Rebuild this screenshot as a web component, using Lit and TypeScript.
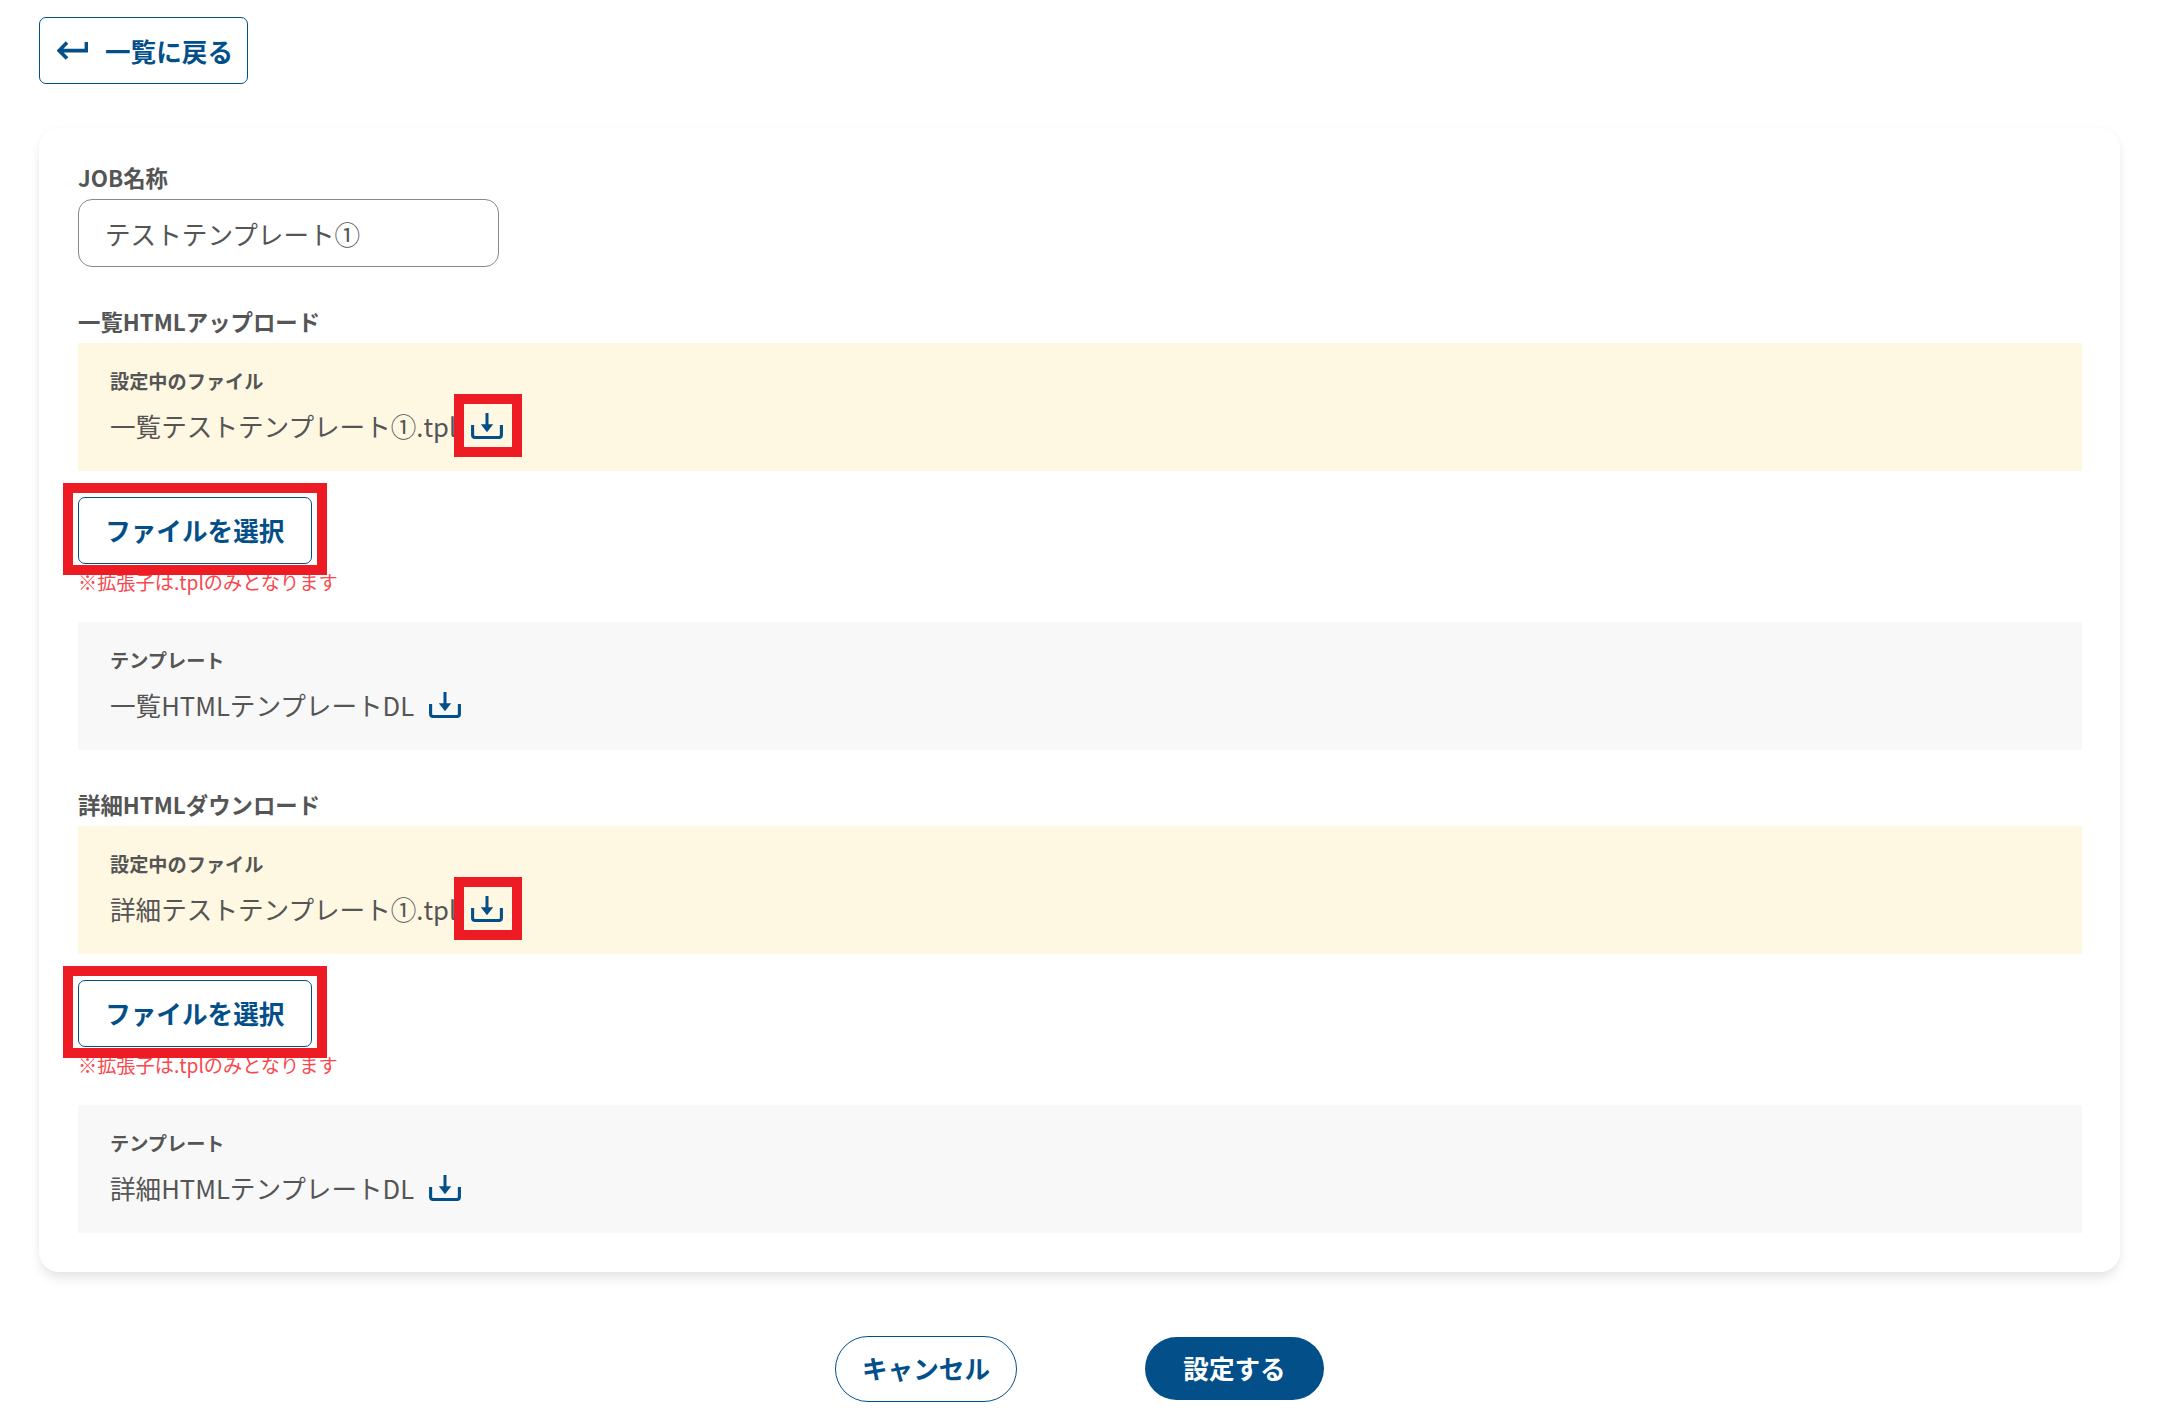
import { LitElement, html, css } from "lit";
import { customElement } from "lit/decorators.js";

const dlIcon = html`<svg class="dl" viewBox="0 0 32 26" width="32" height="26" aria-hidden="true">
  <path d="M1.6 12V22a2.5 2.5 0 0 0 2.5 2.5H27.9a2.5 2.5 0 0 0 2.5-2.5V12" fill="none" stroke="currentColor" stroke-width="3.1"/>
  <path d="M16 0V12" fill="none" stroke="currentColor" stroke-width="3"/>
  <path d="M9.8 11.2H22.2L16 19.2Z" fill="currentColor"/>
</svg>`;

@customElement("app-root")
export class AppRoot extends LitElement {
  static styles = css`
    :host {
      display: block;
      box-sizing: border-box;
      min-height: 1422px;
      padding: 17px 61px 21px 39px;
      background: #fff;
      font-family: "Noto Sans CJK JP", "Noto Sans", sans-serif;
      color: #4d4d4d;
    }
    * { box-sizing: border-box; }
    button { font-family: inherit; cursor: pointer; }
    .back {
      display: inline-flex;
      align-items: center;
      gap: 17.5px;
      width: 208.5px;
      height: 66.5px;
      padding: 0 0 0 16.5px;
      border: 1.4px solid #034f8a;
      border-radius: 7px;
      background: #fff;
      color: #034f8a;
      font-size: 25.6px;
      font-weight: 700;
    }
    .back svg { display: block; }
    .card {
      margin-top: 44.5px;
      padding: 33px 38px 39px 39px;
      background: #fff;
      border-radius: 20px;
      box-shadow: 0 8px 12px -2px rgba(0, 0, 0, 0.1), 0 0 6px rgba(0, 0, 0, 0.03);
    }
    .label {
      font-size: 22.4px;
      font-weight: 700;
      line-height: 32px;
      color: #555;
    }
    .field { margin-top: 6px; }
    .input {
      display: flex;
      align-items: center;
      width: 421px;
      height: 68px;
      padding: 0 26px;
      border: 1.4px solid #888;
      border-radius: 14px;
      font-size: 25.6px;
      color: #555;
    }
    .section { margin-top: 38px; }
    .panel {
      height: 128px;
      margin-top: 6px;
      padding: 23.5px 32px 25.5px;
    }
    .panel.current { background: #fef7e1; }
    .panel.template { background: #f8f8f8; margin-top: 28px; }
    .panel-label {
      font-size: 19.2px;
      font-weight: 700;
      line-height: 28px;
      color: #555;
    }
    .value {
      display: flex;
      align-items: center;
      gap: 15px;
      margin-top: 13.5px;
      height: 36px;
      font-size: 25.6px;
      line-height: 36px;
      color: #555;
    }
    .icon-wrap { position: relative; display: block; width: 32px; height: 26px; color: #034f8a; }
    .dl { display: block; }
    .mark-icon {
      position: absolute;
      left: -17px;
      top: -19.5px;
      width: 68px;
      height: 63px;
      border: 10px solid #ed1c24;
    }
    .file-wrap { position: relative; width: 233.5px; margin-top: 26px; }
    .file {
      display: block;
      width: 233.5px;
      height: 67px;
      padding: 0 0 2px;
      border: 1.4px solid #034f8a;
      border-radius: 7px;
      background: #fff;
      color: #034f8a;
      font-size: 25.6px;
      font-weight: 700;
    }
    .mark-file {
      position: absolute;
      left: -15.5px;
      top: -14px;
      width: 264.5px;
      height: 92px;
      border: 10px solid #ed1c24;
    }
    .note {
      margin-top: 6px;
      font-size: 19.2px;
      line-height: 24px;
      color: #f8484e;
    }
    .footer {
      display: flex;
      justify-content: center;
      align-items: center;
      gap: 128px;
      margin-top: 63.5px;
    }
    .pill {
      padding: 0 0 2px;
      border-radius: 999px;
      font-size: 25.6px;
      font-weight: 700;
    }
    .cancel {
      width: 182px;
      height: 66px;
      border: 1.4px solid #034f8a;
      background: #fff;
      color: #034f8a;
    }
    .submit {
      width: 179px;
      height: 63px;
      border: none;
      background: #034f8a;
      color: #fff;
    }
  `;

  private section(title: string, file: string, tpl: string) {
    return html`<section class="section">
      <div class="label">${title}</div>
      <div class="panel current">
        <div class="panel-label">設定中のファイル</div>
        <div class="value">
          <span>${file}</span>
          <span class="icon-wrap">${dlIcon}<span class="mark-icon"></span></span>
        </div>
      </div>
      <div class="file-wrap">
        <button class="file">ファイルを選択</button>
        <span class="mark-file"></span>
      </div>
      <div class="note">※拡張子は.tplのみとなります</div>
      <div class="panel template">
        <div class="panel-label">テンプレート</div>
        <div class="value">
          <span>${tpl}</span>
          <span class="icon-wrap">${dlIcon}</span>
        </div>
      </div>
    </section>`;
  }

  render() {
    return html`
      <button class="back">
        <svg viewBox="0 0 31 19" width="31" height="19" aria-hidden="true">
          <path d="M29.4 1V9.6H3M10 1.6L2.2 9.6L10 17.6" fill="none" stroke="currentColor" stroke-width="3.6"/>
        </svg>
        一覧に戻る
      </button>
      <div class="card">
        <div class="label">JOB名称</div>
        <div class="field"><div class="input">テストテンプレート①</div></div>
        ${this.section("一覧HTMLアップロード", "一覧テストテンプレート①.tpl", "一覧HTMLテンプレートDL")}
        ${this.section("詳細HTMLダウンロード", "詳細テストテンプレート①.tpl", "詳細HTMLテンプレートDL")}
      </div>
      <div class="footer">
        <button class="pill cancel">キャンセル</button>
        <button class="pill submit">設定する</button>
      </div>
    `;
  }
}
